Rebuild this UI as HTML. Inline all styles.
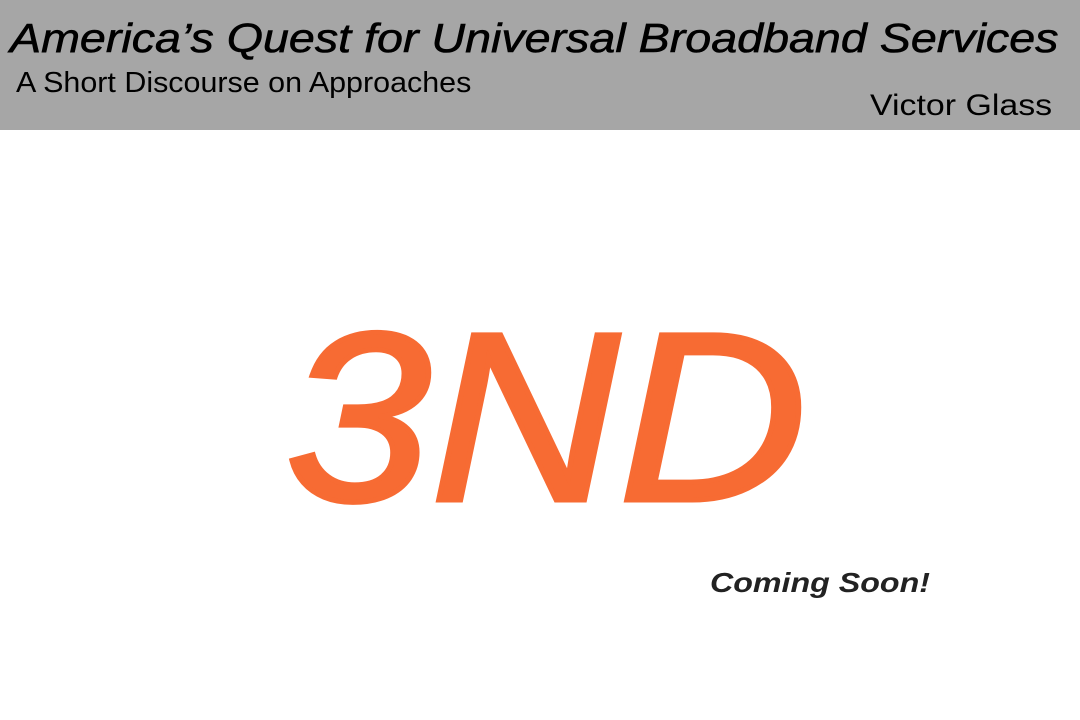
<!DOCTYPE html>
<html><head><style>
html,body{margin:0;padding:0;width:1080px;height:720px;background:#fff;overflow:hidden;font-family:"Liberation Sans",Arial,sans-serif;}
.hdr{position:absolute;left:0;top:0;width:1080px;height:130px;background:#a6a6a6;}
.t{position:absolute;white-space:nowrap;color:#000;line-height:1;transform-origin:0 0;}
</style></head><body>
<div class="hdr"></div>
<div class="t" style="left:10px;top:18px;font-size:41px;font-style:italic;transform:scaleX(1.137);-webkit-text-stroke:0.6px #000;">America’s Quest for Universal Broadband Services</div>
<div class="t" style="left:16px;top:69px;font-size:29px;transform:scaleX(1.05);">A Short Discourse on Approaches</div>
<div class="t" style="left:870px;top:91px;font-size:30px;transform:scaleX(1.13);">Victor Glass</div>
<div class="t" style="left:286px;top:297px;font-size:240px;font-style:italic;color:#f76b33;transform:scaleX(1.085);-webkit-text-stroke:5px #f76b33;">3ND</div>
<div class="t" style="left:710px;top:569px;font-size:28px;font-style:italic;font-weight:bold;color:#222;transform:scaleX(1.15);">Coming Soon!</div>
</body></html>
